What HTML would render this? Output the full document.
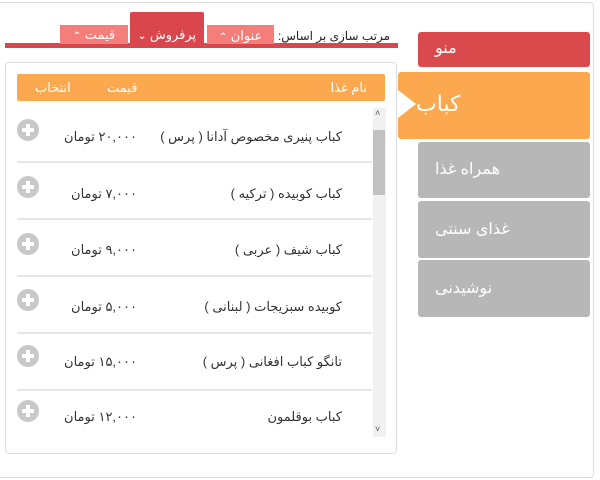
<!DOCTYPE html>
<html><head><meta charset="utf-8"><style>
*{margin:0;padding:0;box-sizing:border-box}
body{width:600px;height:480px;background:#fff;position:relative;overflow:hidden;font-family:"Liberation Sans","DejaVu Sans",sans-serif}
.a{position:absolute;white-space:nowrap}
.outer{left:-5px;top:2px;width:599px;height:476px;border:1px solid #ddd;border-radius:4px}
.bar{left:5px;top:43px;width:393px;height:5px;background:#d9474c}
.tab{color:#fff;font-size:13px;direction:rtl;text-align:center}
.panel{left:5px;top:62px;width:392px;height:392px;border:1px solid #ddd;border-radius:4px;background:#fff}
.hdr{left:17px;top:74px;width:368px;height:27px;background:#fca84f;color:#fff;font-size:13px;border-radius:2px}
.row{left:17px;width:355px;height:57px;border-bottom:2px solid #e6e6e6;font-size:13px;color:#333}
.plus{left:0;width:22px;height:22px;border-radius:50%;background:#c8c8c8}
.plus:before{content:"";position:absolute;left:5px;top:9px;width:12px;height:4px;background:#fff}
.plus:after{content:"";position:absolute;left:9px;top:5px;width:4px;height:12px;background:#fff}
.nm{right:30px;direction:rtl}
.pr{left:40px;direction:rtl;width:80px;text-align:right}
.menu{left:418px;width:172px;color:#fff;font-size:16px;direction:rtl;text-align:left;padding-left:17px;border-radius:3px}
</style></head><body>
<div class="a outer"></div>
<div class="a" style="left:280px;width:110px;text-align:right;top:29px;font-size:12px;color:#222;direction:rtl">مرتب سازی بر اساس:</div>
<div class="a bar"></div>
<div class="a tab" style="left:60px;top:25px;width:68px;height:19px;background:#f47e7a;line-height:19px">قیمت <b style="font-size:10px">⌃</b></div>
<div class="a tab" style="left:130px;top:12px;width:74px;height:36px;background:#d9474c;line-height:46px;border-radius:2px 2px 0 0">پرفروش <b style="font-size:10px">⌄</b></div>
<div class="a tab" style="left:207px;top:25px;width:67px;height:19px;background:#f47e7a;line-height:22px">عنوان <b style="font-size:10px">⌃</b></div>
<div class="a panel"></div>
<div class="a hdr"><span class="a" style="right:18px;top:6px">نام غذا</span><span class="a" style="left:90px;top:6px">قیمت</span><span class="a" style="left:18px;top:6px">انتخاب</span></div>
<div class="a" style="left:373px;top:108px;width:13px;height:329px;background:#f1f1f1"></div>
<div class="a" style="left:373px;top:130px;width:12px;height:65px;background:#c1c1c1"></div>
<div class="a" style="left:375px;top:108px;font-size:9px;color:#555">˄</div>
<div class="a" style="left:375px;top:424px;font-size:9px;color:#555">˅</div>
<div class="a row" style="top:106px"><div class="a plus" style="top:13px"></div><span class="a pr" style="top:23px">۲۰,۰۰۰ تومان</span><span class="a nm" style="top:23px">کباب پنیری مخصوص آدانا ( پرس )</span></div>
<div class="a row" style="top:163px"><div class="a plus" style="top:13px"></div><span class="a pr" style="top:23px">۷,۰۰۰ تومان</span><span class="a nm" style="top:23px">کباب کوبیده ( ترکیه )</span></div>
<div class="a row" style="top:220px"><div class="a plus" style="top:13px"></div><span class="a pr" style="top:22px">۹,۰۰۰ تومان</span><span class="a nm" style="top:22px">کباب شیف ( عربی )</span></div>
<div class="a row" style="top:277px"><div class="a plus" style="top:12px"></div><span class="a pr" style="top:22px">۵,۰۰۰ تومان</span><span class="a nm" style="top:22px">کوبیده سبزیجات ( لبنانی )</span></div>
<div class="a row" style="top:334px"><div class="a plus" style="top:11px"></div><span class="a pr" style="top:20px">۱۵,۰۰۰ تومان</span><span class="a nm" style="top:20px">تانگو کباب افغانی ( پرس )</span></div>
<div class="a row" style="top:391px;border:none"><div class="a plus" style="top:9px"></div><span class="a pr" style="top:18px">۱۲,۰۰۰ تومان</span><span class="a nm" style="top:18px">کباب بوقلمون</span></div>
<div class="a menu" style="top:32px;height:35px;background:#da4a4c;line-height:33px">منو</div>
<div class="a" style="left:398px;top:72px;width:192px;height:67px;background:#fca84f;color:#fff;font-size:22px;direction:rtl;text-align:left;padding-left:18px;line-height:64px;border-radius:3px">کباب</div>
<div class="a" style="left:398px;top:90px;width:0;height:0;border-top:14px solid transparent;border-bottom:14px solid transparent;border-left:18px solid #fff"></div>
<div class="a menu" style="top:142px;height:56px;background:#b8b7b7;line-height:56px">همراه غذا</div>
<div class="a menu" style="top:201px;height:57px;background:#b8b7b7;line-height:57px">غذای سنتی</div>
<div class="a menu" style="top:260px;height:57px;background:#b8b7b7;line-height:57px">نوشیدنی</div>
</body></html>
